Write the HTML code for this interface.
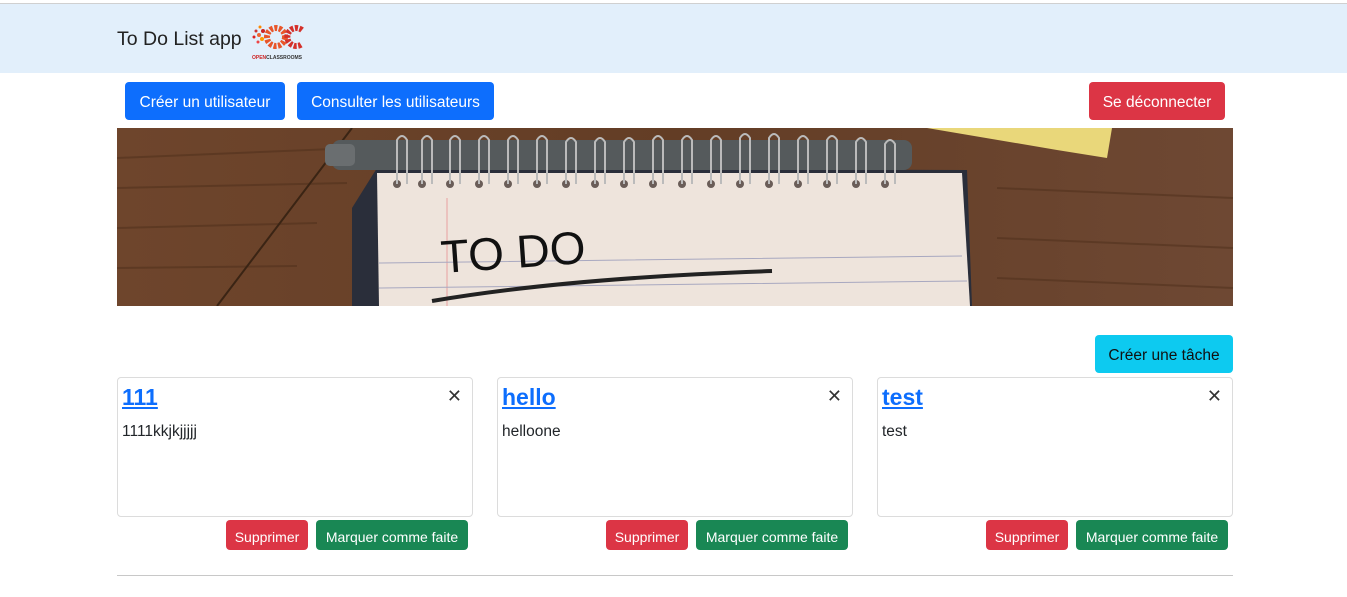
<!DOCTYPE html>
<html><head><meta charset="utf-8"><style>
*{box-sizing:border-box}
body{margin:0;font-family:"Liberation Sans",sans-serif;background:#fff;width:1347px;height:597px;overflow:hidden;position:relative;color:#212529}
.top{position:absolute;left:0;top:3px;width:1347px;height:1px;background:#d0d0d0}
.nav{position:absolute;left:0;top:4px;width:1347px;height:69px;background:#e2effb}
.brand{position:absolute;left:117px;top:24px;font-size:19.5px;color:#222}
.btn{position:absolute;color:#fff;border-radius:4px;font-size:15.5px;display:flex;align-items:center;justify-content:center;padding-top:3px}
.card{position:absolute;top:377px;width:356px;height:140px;border:1px solid #dcdcdc;border-radius:4px}
.card a{position:absolute;left:4px;top:6px;font-size:23px;font-weight:bold;color:#0d6efd;text-decoration:underline}
.card .x{position:absolute;right:10px;top:8px;font-size:18px;color:#333}
.card p{position:absolute;left:4px;top:45px;margin:0;font-size:15.5px}
.sm{font-size:14px;top:520px;height:30px}
</style></head><body>
<div class="top"></div>
<div class="nav">
<div class="brand">To Do List app</div>
<svg style="position:absolute;left:250px;top:15px" width="58" height="42" viewBox="0 0 58 42">
<g fill="#e44">
<circle cx="6" cy="12" r="1.5" fill="#c33"/><circle cx="10" cy="8" r="1.5" fill="#f80"/><circle cx="4" cy="18" r="1.5" fill="#d22"/><circle cx="9" cy="16" r="2" fill="#e63"/><circle cx="13" cy="12" r="2" fill="#c22"/><circle cx="12" cy="20" r="2" fill="#f90"/><circle cx="8" cy="23" r="1.5" fill="#e44"/>
</g>
<circle cx="26" cy="18" r="9" fill="none" stroke="#e8552a" stroke-width="6" stroke-dasharray="3 1.5"/>
<path d="M52 11 A9 9 0 1 0 52 25" fill="none" stroke="#d4302a" stroke-width="6" stroke-dasharray="3 1.5"/>
<text x="2" y="40" font-size="5" font-family="Liberation Sans" font-weight="bold" fill="#c22">OPEN<tspan fill="#333">CLASSROOMS</tspan></text>
</svg>
</div>
<div class="btn" style="left:125px;top:82px;width:160px;height:38px;background:#0d6efd">Créer un utilisateur</div>
<div class="btn" style="left:297px;top:82px;width:197px;height:38px;background:#0d6efd">Consulter les utilisateurs</div>
<div class="btn" style="left:1089px;top:82px;width:136px;height:38px;background:#dc3545">Se déconnecter</div>
<svg style="position:absolute;left:117px;top:128px" width="1116" height="178" viewBox="0 0 1116 178">
<defs><linearGradient id="w" x1="0" x2="1"><stop offset="0" stop-color="#6e452c"/><stop offset=".5" stop-color="#633d25"/><stop offset="1" stop-color="#6e4833"/></linearGradient></defs>
<rect width="1116" height="178" fill="url(#w)"/>
<g stroke="#4e2f1b" stroke-width="2" opacity=".5"><path d="M0 30 L240 20M0 60 L230 55M0 100 L200 95M0 140 L180 138M880 60 L1116 70M880 110 L1116 120M880 150 L1116 160"/></g>
<path d="M235 0 L100 178" stroke="#3a2414" stroke-width="2"/>
<polygon points="810,0 995,0 990,30 940,22" fill="#e9d77a"/>
<polygon points="235,80 260,40 850,42 855,178 235,178" fill="#2a2e3a"/>
<polygon points="260,45 845,45 853,178 262,178" fill="#eee4dc"/>
<rect x="215" y="12" width="580" height="30" rx="8" fill="#555a5c"/>
<rect x="208" y="16" width="30" height="22" rx="5" fill="#6a6e70"/>
<g fill="#6a5d58"><circle cx="280" cy="56" r="4"/><circle cx="305" cy="56" r="4"/><circle cx="333" cy="56" r="4"/><circle cx="362" cy="56" r="4"/><circle cx="391" cy="56" r="4"/><circle cx="420" cy="56" r="4"/><circle cx="449" cy="56" r="4"/><circle cx="478" cy="56" r="4"/><circle cx="507" cy="56" r="4"/><circle cx="536" cy="56" r="4"/><circle cx="565" cy="56" r="4"/><circle cx="594" cy="56" r="4"/><circle cx="623" cy="56" r="4"/><circle cx="652" cy="56" r="4"/><circle cx="681" cy="56" r="4"/><circle cx="710" cy="56" r="4"/><circle cx="739" cy="56" r="4"/><circle cx="768" cy="56" r="4"/></g>
<g fill="none" stroke="#bbb" stroke-width="2"><path d="M280 56 V12 Q285 4 290 12 V56M305 56 V12 Q310 4 315 12 V56M333 56 V12 Q338 4 343 12 V56M362 56 V12 Q367 4 372 12 V56M391 56 V12 Q396 4 401 12 V56M420 56 V12 Q425 4 430 12 V56M449 56 V14 Q454 6 459 14 V56M478 56 V14 Q483 6 488 14 V56M507 56 V14 Q512 6 517 14 V56M536 56 V12 Q541 4 546 12 V56M565 56 V12 Q570 4 575 12 V56M594 56 V12 Q599 4 604 12 V56M623 56 V10 Q628 2 633 10 V56M652 56 V10 Q657 2 662 10 V56M681 56 V12 Q686 4 691 12 V56M710 56 V12 Q715 4 720 12 V56M739 56 V14 Q744 6 749 14 V56M768 56 V16 Q773 8 778 16 V56"/></g>
<path d="M330 70 V178" stroke="#e8a0a0" stroke-width="1"/>
<g stroke="#a8a8c0" stroke-width="1"><path d="M262 135 L845 128M262 160 L850 153"/></g>
<text x="325" y="145" font-size="46" font-family="Liberation Sans" fill="#111" transform="rotate(-4 325 145)">TO DO</text>
<path d="M315 173 Q450 150 655 143" stroke="#222" stroke-width="4" fill="none"/>
</svg>
<div class="btn" style="left:1095px;top:335px;width:138px;height:38px;background:#0dcaf0;color:#111">Créer une tâche</div>
<div class="card" style="left:117px"><a>111</a><span class="x">✕</span><p>1111kkjkjjjjj</p></div>
<div class="card" style="left:497px"><a>hello</a><span class="x">✕</span><p>helloone</p></div>
<div class="card" style="left:877px"><a>test</a><span class="x">✕</span><p>test</p></div>
<div class="btn sm" style="left:226px;width:82px;background:#dc3545">Supprimer</div>
<div class="btn sm" style="left:316px;width:152px;background:#198754">Marquer comme faite</div>
<div class="btn sm" style="left:606px;width:82px;background:#dc3545">Supprimer</div>
<div class="btn sm" style="left:696px;width:152px;background:#198754">Marquer comme faite</div>
<div class="btn sm" style="left:986px;width:82px;background:#dc3545">Supprimer</div>
<div class="btn sm" style="left:1076px;width:152px;background:#198754">Marquer comme faite</div>
<div style="position:absolute;left:117px;top:575px;width:1116px;height:1px;background:#c8c8c8"></div>
</body></html>
